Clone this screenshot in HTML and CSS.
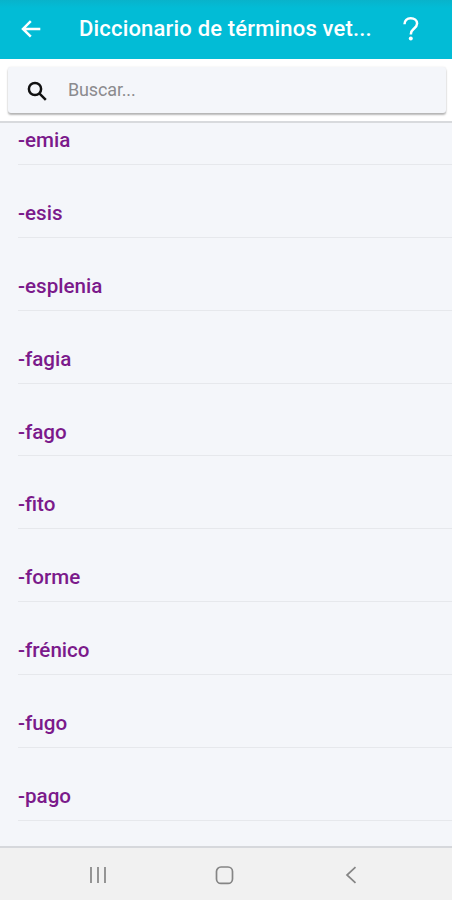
FILE: index.html
```html
<!DOCTYPE html>
<html lang="es">
<head>
    <meta charset="UTF-8">
    <meta name="viewport" content="width=device-width, initial-scale=1.0">
    <title>Diccionario de términos veterinarios</title>
    <link rel="stylesheet" href="styles.css">
</head>
<body>

<header class="app-bar">
    <svg class="back-icon" viewBox="0 0 20 18" aria-label="Atrás">
        <path d="M19.3 8.9H2.2M9.8 1.2L2 8.9l7.8 7.7"/>
    </svg>
    <h1>Diccionario de términos vet...</h1>
    <svg class="help-icon" viewBox="0 0 16 24" aria-label="Ayuda">
        <path d="M1.5 7.2C1.5 3.5 4 1.3 7.7 1.3s6.4 2.1 6.4 5.3c0 2.5-1.5 3.7-3.3 5.2-2 1.7-2.9 2.8-2.9 5.2v.6"/>
        <circle cx="7.8" cy="21.6" r="2"/>
    </svg>
</header>

<div class="search-container">
    <div class="search-box">
        <svg class="search-icon" viewBox="0 0 20 20">
            <circle cx="8" cy="8" r="6.1"/>
            <path d="M12.3 12.3l6.5 6.5"/>
        </svg>
        <input type="text" placeholder="Buscar..." aria-label="Buscar">
    </div>
</div>

<main class="term-list">
    <ul>
        <li>-emia</li>
        <li>-esis</li>
        <li>-esplenia</li>
        <li>-fagia</li>
        <li>-fago</li>
        <li>-fito</li>
        <li>-forme</li>
        <li>-frénico</li>
        <li>-fugo</li>
        <li>-pago</li>
    </ul>
</main>

<nav class="nav-bar">
    <svg viewBox="0 0 20 20">
        <path d="M3 2v16M10 2v16M17 2v16"/>
    </svg>
    <svg viewBox="0 0 20 20">
        <rect x="1.5" y="2" width="16" height="16.4" rx="4.5"/>
    </svg>
    <svg viewBox="0 0 20 20">
        <path d="M14.5 2.2L6 10l8.5 7.8"/>
    </svg>
</nav>

</body>
</html>
```
FILE: styles.css
```css
* {
    box-sizing: border-box;
}

body {
    margin: 0;
    height: 100vh;
    display: flex;
    flex-direction: column;
    overflow: hidden;
    font-family: Roboto, sans-serif;
    background: #f4f6fa;
}

svg {
    fill: none;
    flex: none;
}

/* Top bar */
.app-bar {
    display: flex;
    align-items: center;
    height: 59px;
    flex: none;
    padding: 0 33px 2px 21px;
    background: linear-gradient(#08b3cb, #02bcd6 8px);
    color: white;
}

.app-bar h1 {
    flex: 1;
    margin: 0 0 0 38px;
    font-size: 22px;
    font-weight: 500;
    line-height: 28px;
    letter-spacing: 0.18px;
    white-space: nowrap;
}

.back-icon {
    width: 20px;
    height: 18px;
    stroke: white;
    stroke-width: 2.5;
}

.help-icon {
    width: 16px;
    height: 24px;
    stroke: white;
    stroke-width: 2.5;
}

.help-icon circle {
    fill: white;
    stroke: none;
}

/* Search */
.search-container {
    height: 62px;
    flex: none;
    padding: 8px 6px 0 8px;
    background: white;
}

.search-box {
    display: flex;
    align-items: center;
    height: 46px;
    padding-left: 19px;
    border-radius: 3px;
    background: #f4f6fa;
    box-shadow: 0 2px 2px rgba(0, 0, 0, 0.28), 0 0 2px rgba(0, 0, 0, 0.1);
}

.search-icon {
    width: 20px;
    height: 20px;
    margin-top: 1px;
    stroke: #111;
    stroke-width: 2.5;
}

.search-box input {
    flex: 1;
    margin-left: 21px;
    padding: 0 0 2px;
    border: none;
    outline: none;
    background: none;
    font-family: inherit;
    font-size: 18px;
    letter-spacing: -0.15px;
}

.search-box input::placeholder {
    color: #8b8b8e;
}

/* Terms */
.term-list {
    flex: 1;
    overflow: hidden;
    border-top: 2px solid #d8dadd;
}

.term-list ul {
    list-style: none;
    margin: -31px 0 0;
    padding: 0 0 0 18px;
}

.term-list li {
    height: 72.9px;
    padding-top: 36px;
    border-bottom: 1px solid #e6e8ec;
    color: #7b1a8b;
    font-size: 20.6px;
    font-weight: 500;
    line-height: 24px;
}

/* Phone navigation */
.nav-bar {
    display: flex;
    justify-content: space-between;
    align-items: center;
    height: 54px;
    flex: none;
    padding: 2px 91px 0 88px;
    border-top: 2px solid #d6d8dc;
    background: #f1f1f1;
}

.nav-bar svg {
    width: 20px;
    height: 20px;
    stroke: #858585;
    stroke-width: 1.7;
}
```
